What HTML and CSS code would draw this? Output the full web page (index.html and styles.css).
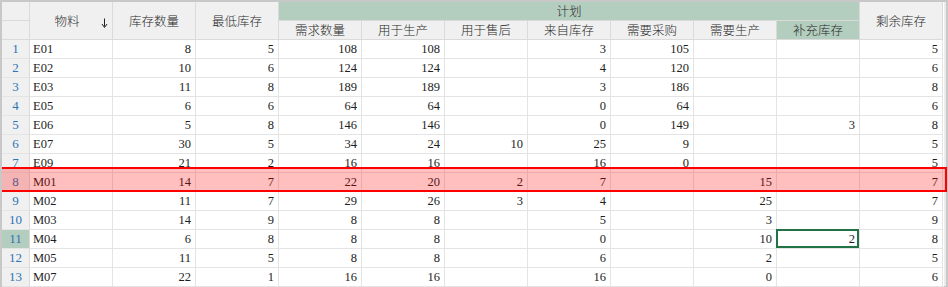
FILE: index.html
```html
<!DOCTYPE html>
<html lang="zh">
<head>
<meta charset="utf-8">
<title>计划</title>
<link rel="stylesheet" href="styles.css">
</head>
<body>
<div class="frame">
  <div class="grid">
    <div class="h rn r1"></div>
    <div class="h span2 c-mat">物料<svg class="sort" width="7" height="10" viewBox="0 0 7 10"><path d="M3.5 0.5V8.5" stroke="#222" stroke-width="1"/><path d="M1 6L3.5 9.5L6 6" fill="none" stroke="#222" stroke-width="1"/></svg></div>
    <div class="h span2">库存数量</div>
    <div class="h span2">最低库存</div>
    <div class="h plan">计划</div>
    <div class="h span2">剩余库存</div>
    <div class="h rn r2"></div>
    <div class="h">需求数量</div>
    <div class="h">用于生产</div>
    <div class="h">用于售后</div>
    <div class="h">来自库存</div>
    <div class="h">需要采购</div>
    <div class="h">需要生产</div>
    <div class="h green">补充库存</div>

    <div class="n">1</div><div class="t">E01</div><div class="d">8</div><div class="d">5</div><div class="d">108</div><div class="d">108</div><div class="d"></div><div class="d">3</div><div class="d">105</div><div class="d"></div><div class="d"></div><div class="d">5</div>
    <div class="n">2</div><div class="t">E02</div><div class="d">10</div><div class="d">6</div><div class="d">124</div><div class="d">124</div><div class="d"></div><div class="d">4</div><div class="d">120</div><div class="d"></div><div class="d"></div><div class="d">6</div>
    <div class="n">3</div><div class="t">E03</div><div class="d">11</div><div class="d">8</div><div class="d">189</div><div class="d">189</div><div class="d"></div><div class="d">3</div><div class="d">186</div><div class="d"></div><div class="d"></div><div class="d">8</div>
    <div class="n">4</div><div class="t">E05</div><div class="d">6</div><div class="d">6</div><div class="d">64</div><div class="d">64</div><div class="d"></div><div class="d">0</div><div class="d">64</div><div class="d"></div><div class="d"></div><div class="d">6</div>
    <div class="n">5</div><div class="t">E06</div><div class="d">5</div><div class="d">8</div><div class="d">146</div><div class="d">146</div><div class="d"></div><div class="d">0</div><div class="d">149</div><div class="d"></div><div class="d">3</div><div class="d">8</div>
    <div class="n">6</div><div class="t">E07</div><div class="d">30</div><div class="d">5</div><div class="d">34</div><div class="d">24</div><div class="d">10</div><div class="d">25</div><div class="d">9</div><div class="d"></div><div class="d"></div><div class="d">5</div>
    <div class="n">7</div><div class="t">E09</div><div class="d">21</div><div class="d">2</div><div class="d">16</div><div class="d">16</div><div class="d"></div><div class="d">16</div><div class="d">0</div><div class="d"></div><div class="d"></div><div class="d">5</div>
    <div class="n">8</div><div class="t">M01</div><div class="d">14</div><div class="d">7</div><div class="d">22</div><div class="d">20</div><div class="d">2</div><div class="d">7</div><div class="d"></div><div class="d">15</div><div class="d"></div><div class="d">7</div>
    <div class="n">9</div><div class="t">M02</div><div class="d">11</div><div class="d">7</div><div class="d">29</div><div class="d">26</div><div class="d">3</div><div class="d">4</div><div class="d"></div><div class="d">25</div><div class="d"></div><div class="d">7</div>
    <div class="n">10</div><div class="t">M03</div><div class="d">14</div><div class="d">9</div><div class="d">8</div><div class="d">8</div><div class="d"></div><div class="d">5</div><div class="d"></div><div class="d">3</div><div class="d"></div><div class="d">9</div>
    <div class="n active">11</div><div class="t">M04</div><div class="d">6</div><div class="d">8</div><div class="d">8</div><div class="d">8</div><div class="d"></div><div class="d">0</div><div class="d"></div><div class="d">10</div><div class="d sel">2</div><div class="d">8</div>
    <div class="n">12</div><div class="t">M05</div><div class="d">11</div><div class="d">5</div><div class="d">8</div><div class="d">8</div><div class="d"></div><div class="d">6</div><div class="d"></div><div class="d">2</div><div class="d"></div><div class="d">5</div>
    <div class="n">13</div><div class="t">M07</div><div class="d">22</div><div class="d">1</div><div class="d">16</div><div class="d">16</div><div class="d"></div><div class="d">16</div><div class="d"></div><div class="d">0</div><div class="d"></div><div class="d">6</div>
  </div>
  <div class="side"></div>
  <div class="hl"></div>
</div>
</body>
</html>
```

FILE: styles.css
```css
html, body {
  margin: 0;
  padding: 0;
  background: #ffffff;
}

.frame {
  position: relative;
  width: 948px;
  height: 287px;
  box-sizing: border-box;
  border-top: 2px solid #c8c8c8;
  border-left: 2px solid #c8c8c8;
  display: flex;
  overflow: hidden;
  font-family: "Noto Sans CJK SC", "Liberation Sans", sans-serif;
  font-size: 12px;
  color: #1e1e1e;
}

.grid {
  display: grid;
  grid-template-columns: 28px repeat(11, 83px);
  grid-auto-rows: 19px;
  width: 941px;
}

.grid > div {
  box-sizing: border-box;
  border-right: 1px solid #e4e4e4;
  border-bottom: 1px solid #e4e4e4;
  line-height: 18px;
  white-space: nowrap;
  overflow: hidden;
}

.grid > .h {
  background: #f0f0f0;
  border-color: #dadada;
  display: flex;
  align-items: center;
  justify-content: center;
  color: #2a2a2a;
  font-size: 12.5px;
  font-weight: 300;
  position: relative;
}

.grid > .span2 {
  grid-row: span 2;
}

.grid > .plan {
  grid-column: span 7;
  background: #b3cdbf;
  border-right-color: #dadada;
}

.grid > .green {
  background: #b3cdbf;
}

.grid > .rn {
  grid-column: 1;
}

.sort {
  position: absolute;
  right: 4px;
  top: 16px;
}

.c-mat {
  padding-right: 8px;
}

.grid > .n {
  background: #f0f0f0;
  border-right-color: #dadada;
  border-bottom-color: #e4e4e4;
  color: #2e74b5;
  text-align: center;
  font-family: "Liberation Serif", serif;
  font-size: 13px;
}

.grid > .n.active {
  background: #b3cdbf;
}

.grid > .t {
  padding-left: 3px;
  font-family: "Liberation Serif", serif;
  font-size: 12.5px;
}

.grid > .d {
  text-align: right;
  padding-right: 4px;
  font-family: "Liberation Serif", serif;
  font-size: 12.5px;
}

.grid > .sel {
  position: relative;
  overflow: visible;
}

.grid > .sel::after {
  content: "";
  position: absolute;
  top: -1px;
  left: -1px;
  right: 0;
  bottom: 0;
  border: 2px solid #217346;
}

.side {
  flex: 1;
  border-left: 1px solid #ffffff;
  background: #ececec;
  border-right: 2px solid #c8c8c8;
  border-bottom: 1px solid #c8c8c8;
}

.hl {
  position: absolute;
  top: 165px;
  left: -2px;
  width: 947px;
  height: 25px;
  box-sizing: border-box;
  border: 2px solid #ff0000;
  background: rgba(255, 0, 0, 0.25);
  pointer-events: none;
}
```
